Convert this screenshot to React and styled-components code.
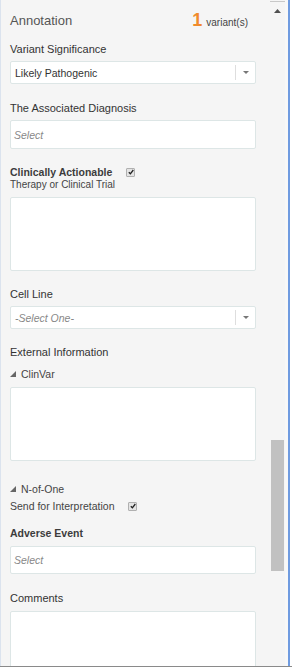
import React from 'react'
import styled, { createGlobalStyle } from 'styled-components'

const GlobalStyle = createGlobalStyle`
  html, body {
    margin: 0;
    padding: 0;
    background: #fff;
  }
  body {
    font-family: "Liberation Sans", Arial, sans-serif;
  }
`

const Frame = styled.div`
  display: flex;
  width: 292px;
  height: 666px;
  overflow: hidden;
  background: #f5f5f5;
  border-bottom: 1px solid #8a8a8a;
`

const Panel = styled.div`
  flex: none;
  width: 270px;
  box-sizing: border-box;
  padding-left: 9px;
  border-left: 1px solid #dbe3ee;
  overflow: hidden;
`

const Column = styled.div`
  width: 246px;
  display: flex;
  flex-direction: column;
`

const Header = styled.div`
  height: 40px;
  display: flex;
  align-items: center;
  justify-content: space-between;
  padding-right: 8px;
`

const Title = styled.div`
  font-size: 13px;
  color: #555;
`

const Count = styled.div`
  display: flex;
  align-items: baseline;
  gap: 4px;
  font-size: 10px;
  color: #444;
  b {
    font-size: 18px;
    font-weight: bold;
    color: #f08a2c;
  }
`

const Label = styled.div`
  margin-top: ${p => p.top || 0}px;
  line-height: 14px;
  font-size: ${p => (p.bold ? '10.5px' : '11px')};
  font-weight: ${p => (p.bold ? 'bold' : 'normal')};
  color: ${p => (p.bold ? '#3c3c3c' : '#333')};
  display: flex;
  align-items: center;
`

const SubLabel = styled.div`
  margin-top: ${p => p.top || 0}px;
  line-height: ${p => p.lh || 12}px;
  font-size: ${p => p.size || 10}px;
  color: #444;
  display: flex;
  align-items: center;
`

const Toggle = styled.span`
  display: inline-flex;
  align-items: center;
  gap: 5px;
  svg {
    display: block;
  }
`

const Box = styled.div`
  margin-top: ${p => p.top || 6}px;
  height: ${p => p.h}px;
  box-sizing: border-box;
  background: #fff;
  border: 1px solid #dde6e6;
  border-radius: 2px;
  display: flex;
  align-items: center;
  font-size: 10.5px;
  color: #333;
  padding-left: 3px;
`

const Placeholder = styled.span`
  font-style: italic;
  color: #888;
`

const Value = styled.span`
  flex: 1;
  padding-left: 1px;
`

const Caret = styled.span`
  align-self: stretch;
  width: 19px;
  margin: 3px 0;
  border-left: 1px solid #dedede;
  display: flex;
  align-items: center;
  justify-content: center;
  svg {
    display: block;
  }
`

const Check = styled.span`
  margin-left: 14px;
  width: 7px;
  height: 7px;
  border: 1px solid #b0b0b0;
  border-radius: 1px;
  background: #e4e4e4;
  display: inline-flex;
  align-items: center;
  justify-content: center;
  svg {
    display: block;
  }
`

const Scroll = styled.div`
  flex: none;
  width: 15px;
  margin-top: 1px;
  border-top: 1px solid #c8c8c8;
  display: flex;
  flex-direction: column;
  align-items: center;
`

const ArrowUp = styled.div`
  margin-top: 7px;
  line-height: 0;
  svg {
    display: block;
  }
`

const Thumb = styled.div`
  margin-top: 427px;
  width: 13px;
  height: 131px;
  background: #c1c1c1;
`

const Edge = styled.div`
  flex: none;
  width: 3px;
  background: #f8f8f8;
`

const BlueLine = styled.div`
  flex: none;
  width: 2px;
  background: #6f9be0;
`

const Outside = styled.div`
  flex: none;
  width: 2px;
  background: #fff;
`

const Tri = () => (
  <svg width="6" height="6" viewBox="0 0 6 6">
    <path d="M6 0 L6 6 L0 6 Z" fill="#666" />
  </svg>
)

const DownArrow = () => (
  <svg width="6" height="3" viewBox="0 0 6 3">
    <path d="M0 0 H6 L3 3 Z" fill="#777" />
  </svg>
)

const CheckBox = () => (
  <Check>
    <svg width="6" height="6" viewBox="0 0 6 6">
      <path d="M0.8 3.2 L2.4 4.8 L5.3 1" stroke="#222" strokeWidth="1.3" fill="none" />
    </svg>
  </Check>
)

const Select = ({ top, value, placeholder }) => (
  <Box top={top} h={23}>
    <Value>{value ? value : <Placeholder>{placeholder}</Placeholder>}</Value>
    <Caret>
      <DownArrow />
    </Caret>
  </Box>
)

export default function App() {
  return (
    <>
      <GlobalStyle />
      <Frame>
        <Panel>
          <Column>
            <Header>
              <Title>Annotation</Title>
              <Count>
                <b>1</b>
                <span>variant(s)</span>
              </Count>
            </Header>

            <Label top={2}>Variant Significance</Label>
            <Select top={5} value="Likely Pathogenic" />

            <Label top={17}>The Associated Diagnosis</Label>
            <Box top={5} h={29}>
              <Placeholder>Select</Placeholder>
            </Box>

            <Label top={16} bold>
              Clinically Actionable
              <CheckBox />
            </Label>
            <SubLabel>Therapy or Clinical Trial</SubLabel>
            <Box top={6} h={74} />

            <Label top={16}>Cell Line</Label>
            <Select top={5} placeholder="-Select One-" />

            <Label top={16}>External Information</Label>
            <SubLabel top={8} lh={14} size={10.5}>
              <Toggle>
                <Tri />
                ClinVar
              </Toggle>
            </SubLabel>
            <Box top={6} h={74} />

            <SubLabel top={21} lh={14} size={10.5}>
              <Toggle>
                <Tri />
                N-of-One
              </Toggle>
            </SubLabel>
            <SubLabel top={3} lh={14} size={10.5}>
              Send for Interpretation
              <CheckBox />
            </SubLabel>

            <Label top={13} bold>Adverse Event</Label>
            <Box top={6} h={28}>
              <Placeholder>Select</Placeholder>
            </Box>

            <Label top={17}>Comments</Label>
            <Box top={6} h={80} />
          </Column>
        </Panel>
        <Scroll>
          <ArrowUp>
            <svg width="7" height="4" viewBox="0 0 7 4">
              <path d="M0 4 L3.5 0 L7 4 Z" fill="#505050" />
            </svg>
          </ArrowUp>
          <Thumb />
        </Scroll>
        <Edge />
        <BlueLine />
        <Outside />
      </Frame>
    </>
  )
}
